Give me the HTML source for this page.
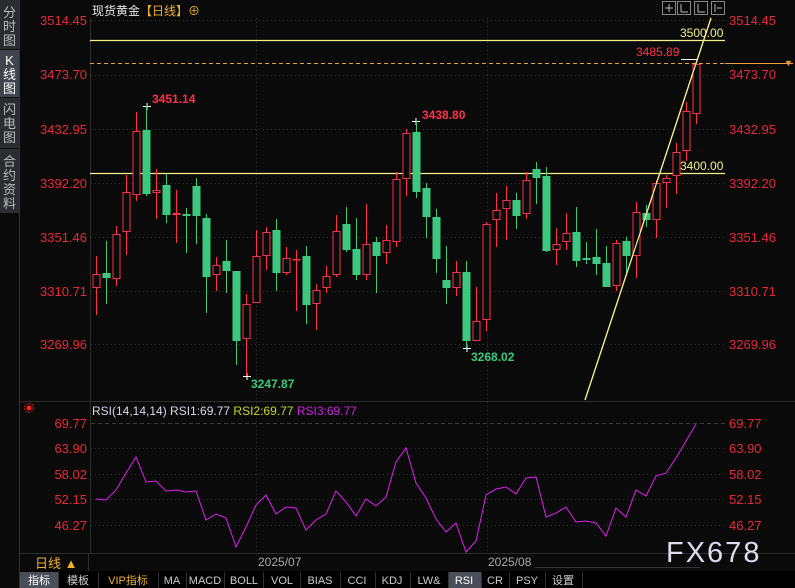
<!DOCTYPE html>
<html><head><meta charset="utf-8"><style>
html,body{margin:0;padding:0;background:#0a0a0a;width:795px;height:588px;overflow:hidden}
svg{display:block}
text{font-family:"Liberation Sans","Noto Sans CJK SC",sans-serif}
</style></head><body>
<svg width="795" height="588" xmlns="http://www.w3.org/2000/svg">
<rect width="795" height="588" fill="#0a0a0a"/>
<!-- left strip -->
<rect x="0" y="0" width="19" height="213" fill="#2b2c30"/>
<rect x="0" y="50" width="19" height="47" fill="#41444c"/>
<line x1="19.5" y1="0" x2="19.5" y2="588" stroke="#333"/>
<line x1="0" y1="49.5" x2="19" y2="49.5" stroke="#111"/>
<line x1="0" y1="97.5" x2="19" y2="97.5" stroke="#111"/>
<line x1="0" y1="148.5" x2="19" y2="148.5" stroke="#111"/>
<g font-size="13" fill="#bbb" text-anchor="middle">
<text x="9.5" y="17">分</text><text x="9.5" y="31">时</text><text x="9.5" y="45">图</text>
<text x="9.5" y="65" fill="#fff">K</text><text x="9.5" y="79" fill="#fff">线</text><text x="9.5" y="93" fill="#fff">图</text>
<text x="9.5" y="114">闪</text><text x="9.5" y="128">电</text><text x="9.5" y="142">图</text>
<text x="9.5" y="166">合</text><text x="9.5" y="180">约</text><text x="9.5" y="194">资</text><text x="9.5" y="208">料</text>
</g>
<!-- axis lines -->
<line x1="90.5" y1="18" x2="90.5" y2="553" stroke="#2e2e2e"/>
<line x1="20" y1="401.5" x2="795" y2="401.5" stroke="#2e2e2e"/>
<line x1="20" y1="553.5" x2="795" y2="553.5" stroke="#2e2e2e"/>
<line x1="88.5" y1="553" x2="88.5" y2="571" stroke="#2e2e2e"/>
<!-- grid -->
<g stroke="#333" stroke-dasharray="1,3">
<line x1="91" y1="20.5" x2="725" y2="20.5"/><line x1="91" y1="75.5" x2="725" y2="75.5"/>
<line x1="91" y1="129.5" x2="725" y2="129.5"/><line x1="91" y1="183.5" x2="725" y2="183.5"/>
<line x1="91" y1="237.5" x2="725" y2="237.5"/><line x1="91" y1="291.5" x2="725" y2="291.5"/>
<line x1="91" y1="344.5" x2="725" y2="344.5"/>
<line x1="256.5" y1="18" x2="256.5" y2="553"/><line x1="487.5" y1="18" x2="487.5" y2="553"/>
<line x1="91" y1="448.5" x2="725" y2="448.5"/><line x1="91" y1="474.5" x2="725" y2="474.5"/>
<line x1="91" y1="499.5" x2="725" y2="499.5"/><line x1="91" y1="525.5" x2="725" y2="525.5"/>
</g>
<line x1="91" y1="423.5" x2="725" y2="423.5" stroke="#3a3a3a" stroke-dasharray="4,3"/>
<!-- price labels -->
<g font-size="13" fill="#e8283c" text-anchor="end">
<text x="87" y="25">3514.45</text><text x="87" y="79">3473.70</text><text x="87" y="134">3432.95</text>
<text x="87" y="188">3392.20</text><text x="87" y="242">3351.46</text><text x="87" y="296">3310.71</text>
<text x="87" y="349">3269.96</text>
<text x="87" y="428">69.77</text><text x="87" y="453">63.90</text><text x="87" y="479">58.02</text>
<text x="87" y="504">52.15</text><text x="87" y="530">46.27</text>
</g>
<g font-size="13" fill="#e8283c">
<text x="729" y="25">3514.45</text><text x="729" y="79">3473.70</text><text x="729" y="134">3432.95</text>
<text x="729" y="188">3392.20</text><text x="729" y="242">3351.46</text><text x="729" y="296">3310.71</text>
<text x="729" y="349">3269.96</text>
<text x="729" y="428">69.77</text><text x="729" y="453">63.90</text><text x="729" y="479">58.02</text>
<text x="729" y="504">52.15</text><text x="729" y="530">46.27</text>
</g>
<!-- title -->
<text x="92" y="15" font-size="12" fill="#e8e8e8">现货黄金<tspan fill="#f0b030">【日线】</tspan><tspan fill="#f0b030">⊕</tspan></text>
<g fill="none" stroke="#888">
<rect x="662.5" y="1.5" width="13" height="13"/><rect x="677.5" y="1.5" width="13" height="13"/>
<rect x="694.5" y="1.5" width="13" height="13"/><rect x="711.5" y="1.5" width="13" height="13"/>
</g>
<g stroke="#bbb"><line x1="665" y1="8" x2="673" y2="8"/><line x1="669" y1="4" x2="669" y2="12"/>
<line x1="681" y1="4" x2="681" y2="12"/><line x1="681" y1="12" x2="688" y2="12"/><line x1="698" y1="4" x2="698" y2="12"/><line x1="698" y1="12" x2="705" y2="12"/><line x1="715" y1="4" x2="715" y2="12"/><line x1="717" y1="8" x2="722" y2="8"/></g>
<!-- horizontal lines -->
<line x1="90" y1="40.5" x2="725" y2="40.5" stroke="#f4f08a" stroke-width="1.2"/>
<line x1="90" y1="173.5" x2="725" y2="173.5" stroke="#f4f08a" stroke-width="1.2"/>
<line x1="90" y1="63.5" x2="725" y2="63.5" stroke="#e8a040" stroke-dasharray="4,3"/>
<line x1="725" y1="63.5" x2="793" y2="63.5" stroke="#e8a040"/>
<text x="784" y="66" font-size="9" fill="#f0a030">▼</text>
<line x1="681" y1="59.5" x2="697" y2="59.5" stroke="#fff"/>
<g font-size="12">
<text x="680" y="37" fill="#f4f08a">3500.00</text>
<text x="636" y="56" fill="#ff3048">3485.89</text>
<text x="680" y="170" fill="#f4f08a">3400.00</text>
<text x="152" y="103" fill="#ff3048" font-weight="bold">3451.14</text>
<text x="422" y="119" fill="#ff3048" font-weight="bold">3438.80</text>
<text x="251" y="388" fill="#3cc97f" font-weight="bold">3247.87</text>
<text x="471" y="361" fill="#3cc97f" font-weight="bold">3268.02</text>
</g>
<g stroke="#fff"><line x1="143" y1="106.5" x2="151" y2="106.5"/><line x1="147" y1="103" x2="147" y2="110"/>
<line x1="412" y1="121.5" x2="420" y2="121.5"/><line x1="416" y1="118" x2="416" y2="125"/>
<line x1="243" y1="376.5" x2="251" y2="376.5"/><line x1="247" y1="373" x2="247" y2="380"/>
<line x1="463" y1="348.5" x2="471" y2="348.5"/><line x1="467" y1="345" x2="467" y2="352"/></g>
<!-- candles -->
<g id="c" stroke-width="1"></g>
<!-- trend line -->
<line x1="585" y1="400" x2="711" y2="18" stroke="#f4f08a" stroke-width="1.2"/>
<!-- RSI -->
<circle cx="29" cy="408" r="2.5" fill="#ff2020"/><circle cx="29" cy="408" r="4.5" fill="none" stroke="#ff2020" stroke-dasharray="1.5,1.5"/>
<text x="92" y="415" font-size="12" fill="#d8d8e8">RSI(14,14,14)  RSI1:69.77 <tspan fill="#c8d820">RSI2:69.77</tspan> <tspan fill="#d020e0">RSI3:69.77</tspan></text>
<polyline fill="none" stroke="#e020f0" stroke-width="1" points="96,499 106,500 116,490 126,473 136,457 146,482 156,481 166,491 176,490 186,492 196,491 206,520 216,514 226,518 236,547 246,527 256,505 266,495 276,514 286,507 296,508 306,530 316,520 326,514 336,491 346,502 356,516 366,499 376,506 386,497 396,462 406,448 416,483 426,498 436,519 446,532 456,523 466,552 476,541 486,495 496,489 506,487 516,494 526,478 536,477 546,517 556,513 566,507 576,522 586,521 596,523 606,536 616,508 626,517 636,490 646,496 656,476 666,473 676,458 686,441 696,424"/>
<!-- bottom -->
<text x="35" y="568" font-size="13" fill="#f0b030">日线 ▲</text>
<text x="258" y="566" font-size="12" fill="#aaa">2025/07</text>
<text x="488" y="566" font-size="12" fill="#aaa">2025/08</text>
<line x1="535" y1="567.5" x2="700" y2="567.5" stroke="#333"/>
<text x="666" y="562" font-size="29" fill="#dde" letter-spacing="2" font-family="Liberation Sans">FX678</text>
<rect x="20" y="571" width="775" height="17" fill="#000"/>
<rect x="20" y="572" width="38" height="16" fill="#4a4e58"/>
<rect x="448" y="572" width="33" height="16" fill="#4a4e58"/>
<g stroke="#333"><line x1="58.5" y1="572" x2="58.5" y2="588"/><line x1="98.5" y1="572" x2="98.5" y2="588"/><line x1="158.5" y1="572" x2="158.5" y2="588"/><line x1="186.5" y1="572" x2="186.5" y2="588"/><line x1="224.5" y1="572" x2="224.5" y2="588"/><line x1="263.5" y1="572" x2="263.5" y2="588"/><line x1="300.5" y1="572" x2="300.5" y2="588"/><line x1="340.5" y1="572" x2="340.5" y2="588"/><line x1="375.5" y1="572" x2="375.5" y2="588"/><line x1="410.5" y1="572" x2="410.5" y2="588"/><line x1="448.5" y1="572" x2="448.5" y2="588"/><line x1="481.5" y1="572" x2="481.5" y2="588"/><line x1="509.5" y1="572" x2="509.5" y2="588"/><line x1="545.5" y1="572" x2="545.5" y2="588"/><line x1="582.5" y1="572" x2="582.5" y2="588"/></g>
<g font-size="11" fill="#ccc" text-anchor="middle" font-family="Liberation Mono,Noto Sans CJK SC,monospace">
<text x="39" y="584" fill="#fff">指标</text><text x="78" y="584">模板</text><text x="128" y="584" fill="#f0b030">VIP指标</text>
<text x="172" y="584">MA</text><text x="205" y="584">MACD</text><text x="244" y="584">BOLL</text><text x="282" y="584">VOL</text>
<text x="320" y="584">BIAS</text><text x="357" y="584">CCI</text><text x="392" y="584">KDJ</text><text x="429" y="584">LW&amp;</text>
<text x="464" y="584" fill="#fff">RSI</text><text x="495" y="584">CR</text><text x="527" y="584">PSY</text><text x="563" y="584">设置</text>
</g>
<g stroke-width="1">
<line x1="96.5" y1="256" x2="96.5" y2="315" stroke="#ff3048"/><rect x="93" y="274.5" width="7" height="13" fill="#0a0a0a" stroke="#ff3048"/>
<line x1="106.5" y1="241" x2="106.5" y2="304" stroke="#3cc97f"/><rect x="102.5" y="273" width="8" height="5" fill="#3cc97f"/>
<line x1="116.5" y1="226" x2="116.5" y2="286" stroke="#ff3048"/><rect x="113" y="234.5" width="7" height="44" fill="#0a0a0a" stroke="#ff3048"/>
<line x1="126.5" y1="175" x2="126.5" y2="255" stroke="#ff3048"/><rect x="123" y="192.5" width="7" height="39" fill="#0a0a0a" stroke="#ff3048"/>
<line x1="136.5" y1="112" x2="136.5" y2="201" stroke="#ff3048"/><rect x="133" y="131.5" width="7" height="63" fill="#0a0a0a" stroke="#ff3048"/>
<line x1="146.5" y1="106" x2="146.5" y2="196" stroke="#3cc97f"/><rect x="142.5" y="130" width="8" height="64" fill="#3cc97f"/>
<line x1="156.5" y1="169" x2="156.5" y2="219" stroke="#ff3048"/><rect x="153" y="190.5" width="7" height="2" fill="#0a0a0a" stroke="#ff3048"/>
<line x1="166.5" y1="174" x2="166.5" y2="223" stroke="#3cc97f"/><rect x="162.5" y="185" width="8" height="30" fill="#3cc97f"/>
<line x1="176.5" y1="190" x2="176.5" y2="243" stroke="#ff3048"/><rect x="172.5" y="213" width="8" height="2" fill="#ff3048"/>
<line x1="186.5" y1="208" x2="186.5" y2="253" stroke="#3cc97f"/><rect x="182.5" y="214" width="8" height="2" fill="#3cc97f"/>
<line x1="196.5" y1="178" x2="196.5" y2="244" stroke="#3cc97f"/><rect x="192.5" y="186" width="8" height="30" fill="#3cc97f"/>
<line x1="206.5" y1="214" x2="206.5" y2="313" stroke="#3cc97f"/><rect x="202.5" y="218" width="8" height="59" fill="#3cc97f"/>
<line x1="216.5" y1="257" x2="216.5" y2="291" stroke="#ff3048"/><rect x="213" y="265.5" width="7" height="9" fill="#0a0a0a" stroke="#ff3048"/>
<line x1="226.5" y1="240" x2="226.5" y2="293" stroke="#3cc97f"/><rect x="222.5" y="261" width="8" height="10" fill="#3cc97f"/>
<line x1="236.5" y1="271" x2="236.5" y2="365" stroke="#3cc97f"/><rect x="232.5" y="271" width="8" height="70" fill="#3cc97f"/>
<line x1="246.5" y1="294" x2="246.5" y2="376" stroke="#ff3048"/><rect x="243" y="304.5" width="7" height="34" fill="#0a0a0a" stroke="#ff3048"/>
<line x1="256.5" y1="230" x2="256.5" y2="302" stroke="#ff3048"/><rect x="253" y="256.5" width="7" height="46" fill="#0a0a0a" stroke="#ff3048"/>
<line x1="266.5" y1="227" x2="266.5" y2="270" stroke="#ff3048"/><rect x="263" y="232.5" width="7" height="23" fill="#0a0a0a" stroke="#ff3048"/>
<line x1="276.5" y1="219" x2="276.5" y2="291" stroke="#3cc97f"/><rect x="272.5" y="230" width="8" height="43" fill="#3cc97f"/>
<line x1="286.5" y1="247" x2="286.5" y2="275" stroke="#ff3048"/><rect x="283" y="258.5" width="7" height="14" fill="#0a0a0a" stroke="#ff3048"/>
<line x1="296.5" y1="250" x2="296.5" y2="311" stroke="#ff3048"/><rect x="292.5" y="259" width="8" height="1.5" fill="#ff3048"/>
<line x1="306.5" y1="246" x2="306.5" y2="324" stroke="#3cc97f"/><rect x="302.5" y="256" width="8" height="49" fill="#3cc97f"/>
<line x1="316.5" y1="284" x2="316.5" y2="330" stroke="#ff3048"/><rect x="313" y="290.5" width="7" height="13" fill="#0a0a0a" stroke="#ff3048"/>
<line x1="326.5" y1="266" x2="326.5" y2="293" stroke="#ff3048"/><rect x="323" y="276.5" width="7" height="11" fill="#0a0a0a" stroke="#ff3048"/>
<line x1="336.5" y1="215" x2="336.5" y2="277" stroke="#ff3048"/><rect x="333" y="231.5" width="7" height="43" fill="#0a0a0a" stroke="#ff3048"/>
<line x1="346.5" y1="207" x2="346.5" y2="252" stroke="#3cc97f"/><rect x="342.5" y="224" width="8" height="26" fill="#3cc97f"/>
<line x1="356.5" y1="218" x2="356.5" y2="280" stroke="#3cc97f"/><rect x="352.5" y="249" width="8" height="26" fill="#3cc97f"/>
<line x1="366.5" y1="204" x2="366.5" y2="280" stroke="#ff3048"/><rect x="363" y="244.5" width="7" height="30" fill="#0a0a0a" stroke="#ff3048"/>
<line x1="376.5" y1="237" x2="376.5" y2="293" stroke="#3cc97f"/><rect x="372.5" y="242" width="8" height="14" fill="#3cc97f"/>
<line x1="386.5" y1="225" x2="386.5" y2="264" stroke="#ff3048"/><rect x="383" y="240.5" width="7" height="12" fill="#0a0a0a" stroke="#ff3048"/>
<line x1="396.5" y1="172" x2="396.5" y2="247" stroke="#ff3048"/><rect x="393" y="179.5" width="7" height="62" fill="#0a0a0a" stroke="#ff3048"/>
<line x1="406.5" y1="129" x2="406.5" y2="196" stroke="#ff3048"/><rect x="403" y="133.5" width="7" height="45" fill="#0a0a0a" stroke="#ff3048"/>
<line x1="416.5" y1="121" x2="416.5" y2="198" stroke="#3cc97f"/><rect x="412.5" y="132" width="8" height="60" fill="#3cc97f"/>
<line x1="426.5" y1="183" x2="426.5" y2="238" stroke="#3cc97f"/><rect x="422.5" y="188" width="8" height="29" fill="#3cc97f"/>
<line x1="436.5" y1="209" x2="436.5" y2="273" stroke="#3cc97f"/><rect x="432.5" y="217" width="8" height="42" fill="#3cc97f"/>
<line x1="446.5" y1="246" x2="446.5" y2="304" stroke="#3cc97f"/><rect x="442.5" y="280" width="8" height="8" fill="#3cc97f"/>
<line x1="456.5" y1="261" x2="456.5" y2="296" stroke="#ff3048"/><rect x="453" y="272.5" width="7" height="15" fill="#0a0a0a" stroke="#ff3048"/>
<line x1="466.5" y1="261" x2="466.5" y2="348" stroke="#3cc97f"/><rect x="462.5" y="272" width="8" height="69" fill="#3cc97f"/>
<line x1="476.5" y1="287" x2="476.5" y2="341" stroke="#ff3048"/><rect x="473" y="321.5" width="7" height="19" fill="#0a0a0a" stroke="#ff3048"/>
<line x1="486.5" y1="222" x2="486.5" y2="331" stroke="#ff3048"/><rect x="483" y="224.5" width="7" height="95" fill="#0a0a0a" stroke="#ff3048"/>
<line x1="496.5" y1="193" x2="496.5" y2="247" stroke="#ff3048"/><rect x="493" y="210.5" width="7" height="9" fill="#0a0a0a" stroke="#ff3048"/>
<line x1="506.5" y1="186" x2="506.5" y2="240" stroke="#ff3048"/><rect x="503" y="200.5" width="7" height="8" fill="#0a0a0a" stroke="#ff3048"/>
<line x1="516.5" y1="193" x2="516.5" y2="229" stroke="#3cc97f"/><rect x="512.5" y="200" width="8" height="16" fill="#3cc97f"/>
<line x1="526.5" y1="172" x2="526.5" y2="219" stroke="#ff3048"/><rect x="523" y="180.5" width="7" height="33" fill="#0a0a0a" stroke="#ff3048"/>
<line x1="536.5" y1="162" x2="536.5" y2="204" stroke="#3cc97f"/><rect x="532.5" y="169" width="8" height="9" fill="#3cc97f"/>
<line x1="546.5" y1="167" x2="546.5" y2="252" stroke="#3cc97f"/><rect x="542.5" y="176" width="8" height="75" fill="#3cc97f"/>
<line x1="556.5" y1="228" x2="556.5" y2="265" stroke="#ff3048"/><rect x="553" y="244.5" width="7" height="5" fill="#0a0a0a" stroke="#ff3048"/>
<line x1="566.5" y1="213" x2="566.5" y2="250" stroke="#ff3048"/><rect x="563" y="233.5" width="7" height="8" fill="#0a0a0a" stroke="#ff3048"/>
<line x1="576.5" y1="207" x2="576.5" y2="267" stroke="#3cc97f"/><rect x="572.5" y="232" width="8" height="29" fill="#3cc97f"/>
<line x1="586.5" y1="242" x2="586.5" y2="264" stroke="#3cc97f"/><rect x="582.5" y="258" width="8" height="2" fill="#3cc97f"/>
<line x1="596.5" y1="229" x2="596.5" y2="275" stroke="#3cc97f"/><rect x="592.5" y="257" width="8" height="7" fill="#3cc97f"/>
<line x1="606.5" y1="246" x2="606.5" y2="287" stroke="#3cc97f"/><rect x="602.5" y="263" width="8" height="24" fill="#3cc97f"/>
<line x1="616.5" y1="240" x2="616.5" y2="291" stroke="#ff3048"/><rect x="613" y="243.5" width="7" height="42" fill="#0a0a0a" stroke="#ff3048"/>
<line x1="626.5" y1="237" x2="626.5" y2="273" stroke="#3cc97f"/><rect x="622.5" y="241" width="8" height="15" fill="#3cc97f"/>
<line x1="636.5" y1="202" x2="636.5" y2="278" stroke="#ff3048"/><rect x="633" y="212.5" width="7" height="43" fill="#0a0a0a" stroke="#ff3048"/>
<line x1="646.5" y1="205" x2="646.5" y2="227" stroke="#3cc97f"/><rect x="642.5" y="213" width="8" height="7" fill="#3cc97f"/>
<line x1="656.5" y1="180" x2="656.5" y2="238" stroke="#ff3048"/><rect x="653" y="183.5" width="7" height="36" fill="#0a0a0a" stroke="#ff3048"/>
<line x1="666.5" y1="175" x2="666.5" y2="208" stroke="#ff3048"/><rect x="663" y="178.5" width="7" height="4" fill="#0a0a0a" stroke="#ff3048"/>
<line x1="676.5" y1="143" x2="676.5" y2="194" stroke="#ff3048"/><rect x="673" y="152.5" width="7" height="23" fill="#0a0a0a" stroke="#ff3048"/>
<line x1="686.5" y1="102" x2="686.5" y2="161" stroke="#ff3048"/><rect x="683" y="111.5" width="7" height="39" fill="#0a0a0a" stroke="#ff3048"/>
<line x1="696.5" y1="60" x2="696.5" y2="124" stroke="#ff3048"/><rect x="693" y="64.5" width="7" height="49" fill="#0a0a0a" stroke="#ff3048"/>
</g>
<line x1="585" y1="400" x2="711" y2="18" stroke="#f4f08a" stroke-width="1.2"/>
</svg>
</body></html>
